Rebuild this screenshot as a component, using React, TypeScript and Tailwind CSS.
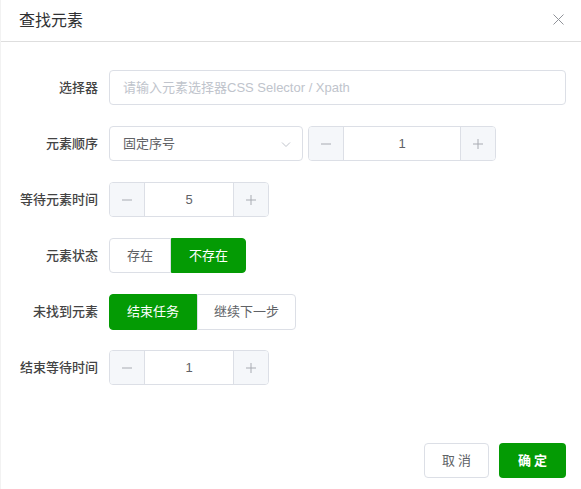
import { useState } from 'react'

const font = { fontFamily: '"Liberation Sans", "Noto Sans CJK SC", sans-serif' }

function Stepper({ value, className }: { value: number; className?: string }) {
  return (
    <div
      className={`flex h-[35px] rounded-[4px] border border-[#dcdfe6] overflow-hidden text-[13px] text-[#606266] ${className ?? ''}`}
    >
      <button className="w-[35px] flex-none bg-[#f5f7fa] border-r border-[#dcdfe6] flex items-center justify-center text-[#a8abb2]">
        <svg width="12" height="12" viewBox="0 0 12 12">
          <path d="M1 6h10" stroke="currentColor" strokeWidth="1" />
        </svg>
      </button>
      <div className="flex-1 flex items-center justify-center bg-white">{value}</div>
      <button className="w-[35px] flex-none bg-[#f5f7fa] border-l border-[#dcdfe6] flex items-center justify-center text-[#a8abb2]">
        <svg width="12" height="12" viewBox="0 0 12 12">
          <path d="M1 6h10M6 1v10" stroke="currentColor" strokeWidth="1" />
        </svg>
      </button>
    </div>
  )
}

function Row({ label, children }: { label: string; children: React.ReactNode }) {
  return (
    <div className="flex items-center h-[35px]">
      <div className="w-[97px] flex-none text-right pr-0 text-[13px] text-[#444] font-medium">{label}</div>
      <div className="ml-[11px] flex items-center">{children}</div>
    </div>
  )
}

export default function App() {
  const [state, setState] = useState('notexist')
  const [notFound, setNotFound] = useState('end')

  return (
    <div className="w-[581px] h-[489px] bg-white flex flex-col border-l border-[#f2f2f2]" style={font}>
      <div className="h-[42px] flex-none flex items-center justify-between pl-[18px] pr-[17px] border-b border-[#dedede]">
        <span className="text-[16px] text-[#303133]">查找元素</span>
        <svg width="11" height="11" viewBox="0 0 11 11" className="text-[#909399] -mt-[2px]">
          <path d="M0.5 0.5l10 10M10.5 0.5l-10 10" stroke="currentColor" strokeWidth="1" />
        </svg>
      </div>

      <div className="pt-[28px] flex flex-col gap-[21px]">
        <Row label="选择器">
          <input
            className="w-[457px] h-[35px] rounded-[4px] border border-[#dcdfe6] px-[13px] text-[13px] text-[#606266] placeholder:text-[#c0c4cc] outline-none"
            placeholder="请输入元素选择器CSS Selector / Xpath"
          />
        </Row>
        <Row label="元素顺序">
          <div className="w-[194px] h-[35px] rounded-[4px] border border-[#dcdfe6] flex items-center justify-between pl-[13px] pr-[10px] text-[13px] text-[#606266]">
            <span>固定序号</span>
            <svg width="12" height="12" viewBox="0 0 12 12" className="text-[#c0c4cc]">
              <path d="M2 4.5l4 4 4-4" stroke="currentColor" strokeWidth="1" fill="none" />
            </svg>
          </div>
          <Stepper value={1} className="ml-[5px] w-[188px]" />
        </Row>
        <Row label="等待元素时间">
          <Stepper value={5} className="w-[160px]" />
        </Row>
        <Row label="元素状态">
          <div className="flex h-[35px] text-[13px]">
            <button
              onClick={() => setState('exist')}
              className={`w-[62px] rounded-l-[4px] border ${state === 'exist' ? 'bg-[#049b04] border-[#049b04] text-white' : 'border-[#dcdfe6] text-[#606266] bg-white'}`}
            >
              存在
            </button>
            <button
              onClick={() => setState('notexist')}
              className={`w-[75px] rounded-r-[4px] border ${state === 'notexist' ? 'bg-[#049b04] border-[#049b04] text-white' : 'border-[#dcdfe6] text-[#606266] bg-white'}`}
            >
              不存在
            </button>
          </div>
        </Row>
        <Row label="未找到元素">
          <div className="flex h-[36px] text-[13px]">
            <button
              onClick={() => setNotFound('end')}
              className={`w-[88px] rounded-l-[4px] border ${notFound === 'end' ? 'bg-[#049b04] border-[#049b04] text-white' : 'border-[#dcdfe6] text-[#606266] bg-white'}`}
            >
              结束任务
            </button>
            <button
              onClick={() => setNotFound('next')}
              className={`w-[99px] rounded-r-[4px] border ${notFound === 'next' ? 'bg-[#049b04] border-[#049b04] text-white' : 'border-[#dcdfe6] text-[#606266] bg-white'}`}
            >
              继续下一步
            </button>
          </div>
        </Row>
        <Row label="结束等待时间">
          <Stepper value={1} className="w-[160px]" />
        </Row>
      </div>

      <div className="mt-auto flex justify-end gap-[10px] pr-[15px] pb-[11px]">
        <button className="w-[65px] h-[35px] rounded-[4px] border border-[#dcdfe6] bg-white text-[13px] text-[#606266] tracking-[3px] pl-[3px]">
          取消
        </button>
        <button className="w-[67px] h-[35px] rounded-[4px] bg-[#049b04] text-[13px] text-white font-bold tracking-[3px] pl-[3px]">
          确定
        </button>
      </div>
    </div>
  )
}
